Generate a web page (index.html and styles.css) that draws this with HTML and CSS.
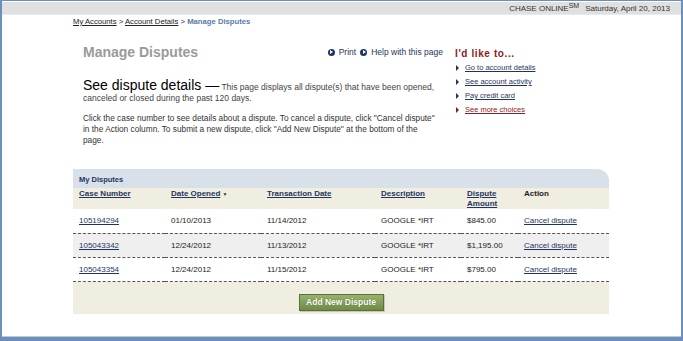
FILE: index.html
```html
<!DOCTYPE html>
<html lang="en">
<head>
    <meta charset="UTF-8">
    <title>Manage Disputes</title>
    <link rel="stylesheet" href="styles.css">
</head>
<body>
    <div class="frame">
        <div class="topbar">
            <span class="brand">CHASE ONLINE<sup>SM</sup></span>
            <span class="date">Saturday, April 20, 2013</span>
        </div>

        <div class="content">
            <div class="crumbs">
                <a href="#">My Accounts</a> &gt; <a href="#">Account Details</a> &gt; <span class="current">Manage Disputes</span>
            </div>

            <div class="top">
                <div class="main">
                    <div class="title-row">
                        <h1>Manage Disputes</h1>
                        <div class="tools">
                            <a href="#"><span class="dot"></span>Print</a>
                            <a href="#"><span class="dot"></span>Help with this page</a>
                        </div>
                    </div>
                    <p class="lead"><span class="big">See dispute details —</span> This page displays all dispute(s) that have been opened, canceled or closed during the past 120 days.</p>
                    <p class="help">Click the case number to see details about a dispute. To cancel a dispute, click "Cancel dispute" in the Action column. To submit a new dispute, click "Add New Dispute" at the bottom of the page.</p>
                </div>
                <div class="side">
                    <h2>I'd like to...</h2>
                    <ul>
                        <li><a href="#">Go to account details</a></li>
                        <li><a href="#">See account activity</a></li>
                        <li><a href="#">Pay credit card</a></li>
                        <li class="more"><a href="#">See more choices</a></li>
                    </ul>
                </div>
            </div>

            <div class="disputes">
                <div class="disputes-head">My Disputes</div>
                <table>
                    <thead>
                        <tr>
                            <th class="c1"><a href="#">Case Number</a></th>
                            <th class="c2"><a href="#">Date Opened</a> <span class="sort">▼</span></th>
                            <th class="c3"><a href="#">Transaction Date</a></th>
                            <th class="c4"><a href="#">Description</a></th>
                            <th class="c5"><a href="#">Dispute Amount</a></th>
                            <th class="c6">Action</th>
                        </tr>
                    </thead>
                    <tbody>
                        <tr>
                            <td><a href="#">105194294</a></td>
                            <td>01/10/2013</td>
                            <td>11/14/2012</td>
                            <td>GOOGLE *IRT</td>
                            <td>$845.00</td>
                            <td><a href="#">Cancel dispute</a></td>
                        </tr>
                        <tr class="alt">
                            <td><a href="#">105043342</a></td>
                            <td>12/24/2012</td>
                            <td>11/13/2012</td>
                            <td>GOOGLE *IRT</td>
                            <td>$1,195.00</td>
                            <td><a href="#">Cancel dispute</a></td>
                        </tr>
                        <tr>
                            <td><a href="#">105043354</a></td>
                            <td>12/24/2012</td>
                            <td>11/15/2012</td>
                            <td>GOOGLE *IRT</td>
                            <td>$795.00</td>
                            <td><a href="#">Cancel dispute</a></td>
                        </tr>
                    </tbody>
                </table>
                <div class="disputes-foot">
                    <button class="add-button">Add New Dispute</button>
                </div>
            </div>
        </div>
    </div>
</body>
</html>
```

FILE: styles.css
```css
* {
    margin: 0;
    padding: 0;
    box-sizing: border-box;
}

html, body {
    height: 100%;
}

body {
    font-family: 'Liberation Sans', Arial, sans-serif;
    background: #fff;
    color: #222;
}

a {
    color: #1f3560;
}

.frame {
    height: 341px;
    border-top: 1px solid #6a8fbf;
    border-left: 2px solid #6a8fbf;
    border-right: 2px solid #6a8fbf;
    border-bottom: 4px solid #6a8fbf;
    box-shadow: inset 0 -1px 0 #c8c8c8;
    overflow: hidden;
}

.topbar {
    height: 13px;
    margin-top: 1px;
    background: #e0e0e0;
    border-bottom: 1px solid #eaeaea;
    display: flex;
    justify-content: flex-end;
    align-items: center;
    gap: 6px;
    padding-right: 11px;
    font-size: 8px;
    color: #333;
}

.brand sup {
    font-size: 7px;
    vertical-align: 3px;
    line-height: 0;
}

.content {
    margin-left: 71px;
    width: 536px;
}

.crumbs {
    margin-top: 2px;
    font-size: 7.7px;
    line-height: 10px;
    color: #222;
}

.crumbs a {
    color: #222;
}

.crumbs .current {
    color: #5a7aa8;
    font-weight: bold;
}

.top {
    display: flex;
    margin-top: 17px;
}

.main {
    width: 370px;
    padding-left: 10px;
}

.title-row {
    display: flex;
    justify-content: space-between;
    align-items: center;
    height: 16px;
}

h1 {
    font-size: 14px;
    color: #9a9a9a;
    font-weight: bold;
}

.tools {
    display: flex;
    gap: 4px;
    font-size: 8.5px;
}

.tools a {
    text-decoration: none;
    color: #1f3560;
    display: flex;
    align-items: center;
    gap: 4px;
}

.dot {
    width: 7px;
    height: 7px;
    border-radius: 50%;
    background: #1f3560;
    position: relative;
}

.dot::after {
    content: "";
    position: absolute;
    left: 2.5px;
    top: 1.5px;
    border-left: 3px solid #fff;
    border-top: 2px solid transparent;
    border-bottom: 2px solid transparent;
}

.lead {
    margin-top: 17px;
    font-size: 8.5px;
    line-height: 10px;
    color: #444;
}

.lead .big {
    font-size: 14px;
    color: #000;
    line-height: 16px;
}

.help {
    margin-top: 10px;
    padding-right: 6px;
    font-size: 8.3px;
    line-height: 11px;
    color: #333;
}

.side {
    margin-left: 12px;
}

.side h2 {
    font-size: 10px;
    color: #8b1c20;
    letter-spacing: 0.6px;
    line-height: 14px;
    margin-top: 3px;
}

.side ul {
    list-style: none;
}

.side li {
    font-size: 7.5px;
    line-height: 14px;
    padding-left: 10px;
    position: relative;
}

.side li::before {
    content: "";
    position: absolute;
    left: 1px;
    top: 4px;
    border-left: 3px solid #1f3560;
    border-top: 3px solid transparent;
    border-bottom: 3px solid transparent;
}

.side li.more::before {
    border-left-color: #8b1c20;
}

.side li.more a {
    color: #8b1c20;
}

.disputes {
    margin-top: 23px;
    width: 536px;
}

.disputes-head {
    background: #d8e0ea;
    border-top-right-radius: 12px;
    height: 19px;
    padding: 6px 6px 0;
    font-size: 7.5px;
    font-weight: bold;
    color: #1f3560;
}

table {
    width: 100%;
    border-collapse: collapse;
    font-size: 8px;
}

thead tr {
    background: #f0eee0;
}

th {
    text-align: left;
    vertical-align: top;
    padding: 1px 6px 0;
    height: 21px;
    line-height: 10px;
    font-weight: bold;
}

th a {
    color: #1f3560;
}

th.c6 {
    color: #222;
}

.sort {
    font-size: 5px;
    color: #333;
}

.c1 { width: 92px; }
.c2 { width: 96px; }
.c3 { width: 114px; }
.c4 { width: 86px; }
.c5 { width: 57px; }

th.c5 a {
    display: inline-block;
    width: 32px;
}

td {
    height: 24px;
    padding: 0 6px;
    border-bottom: 1px dashed #555;
    color: #222;
}

td a {
    color: #1f3560;
}

tr.alt td {
    background: #efefef;
}

.disputes-foot {
    background: #f0eee0;
    height: 32px;
    display: flex;
    justify-content: center;
    align-items: flex-start;
    padding-top: 12px;
}

.add-button {
    font-family: 'Liberation Sans', Arial, sans-serif;
    font-size: 8.5px;
    font-weight: bold;
    color: #fff;
    background: linear-gradient(#97b26b, #6e8c47);
    border: 1px solid #5a7038;
    box-shadow: 1px 1px 0 #c9c9b7;
    height: 17px;
    width: 85px;
    text-shadow: 0 0 1px #4a5e2c;
}
```
